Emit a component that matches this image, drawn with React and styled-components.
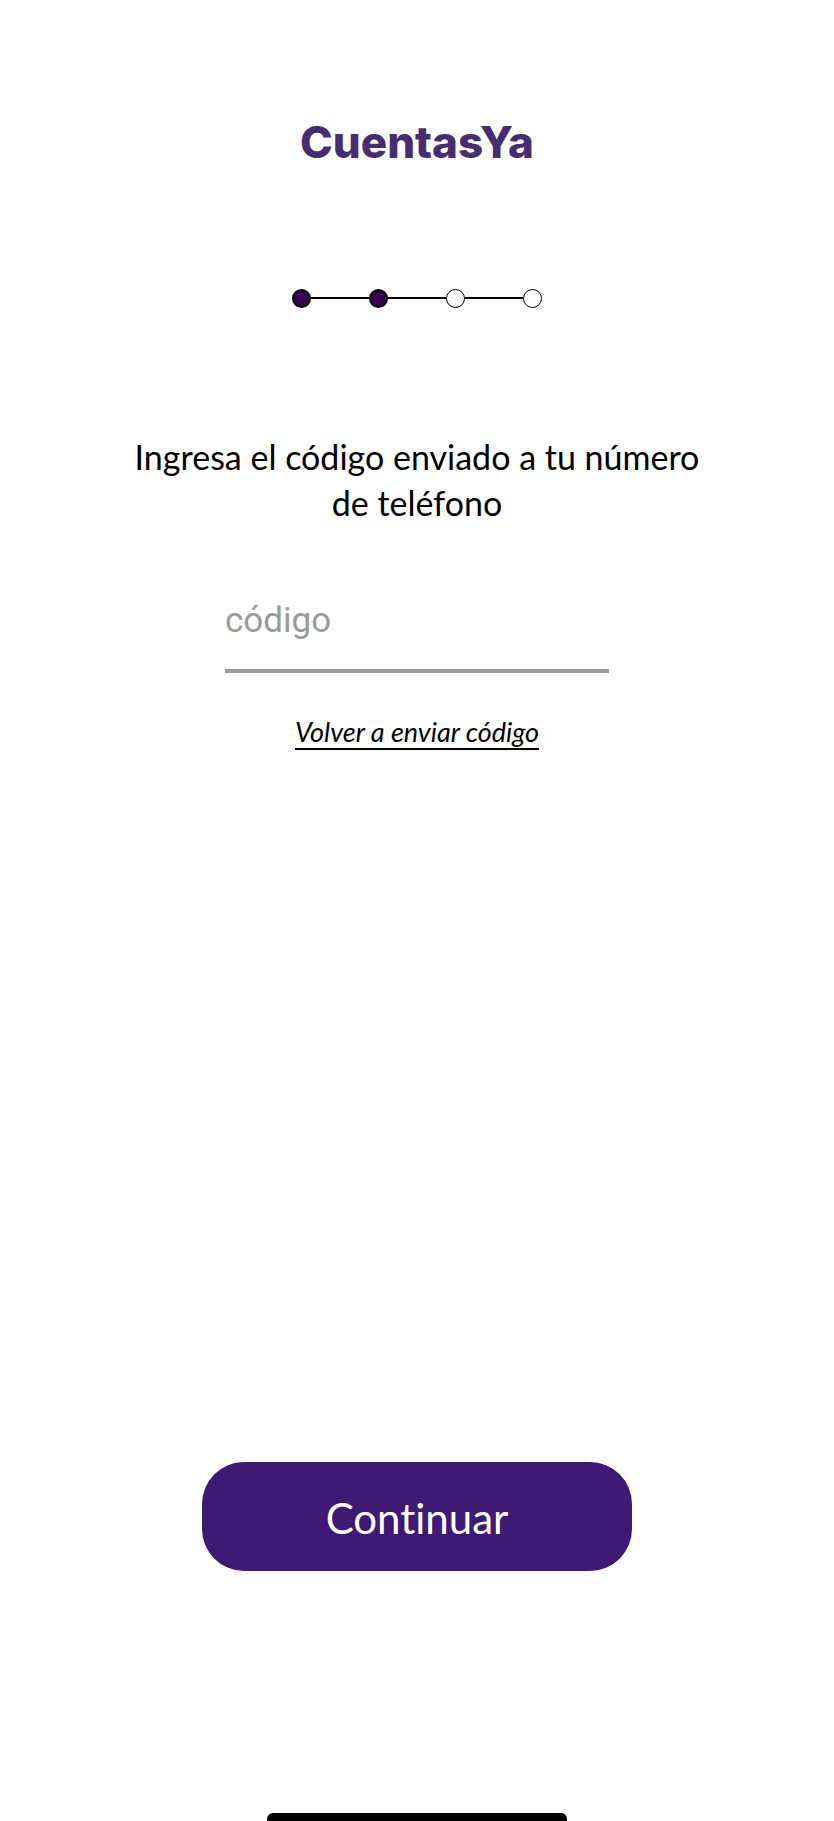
import React, { useState } from "react";
import styled, { createGlobalStyle } from "styled-components";

const GlobalStyle = createGlobalStyle`
  * { box-sizing: border-box; }
  body {
    margin: 0;
    background: #fefefe;
    color: #000;
    font-family: Lato, sans-serif;
    font-variant-ligatures: none;
  }
`;

const Screen = styled.main`
  display: flex;
  flex-direction: column;
  align-items: center;
  min-height: 100vh;
  padding: 115px 24px 0;
`;

const Logo = styled.h1`
  margin: 0;
  font-family: Inter, sans-serif;
  font-size: 44px;
  font-weight: 800;
  line-height: 54px;
  color: #472d70;
`;

const Steps = styled.ol`
  display: flex;
  align-items: center;
  margin: 120px 0 0;
  padding: 0;
  list-style: none;
`;

const Step = styled.li`
  display: flex;
  align-items: center;

  & + &::before {
    content: "";
    width: 58px;
    height: 2px;
    margin-bottom: 2px;
    background: #000;
  }
`;

const Dot = styled.span`
  width: 19px;
  height: 19px;
  border: ${({ $done }) => ($done ? 2 : 1)}px solid #000;
  border-radius: 50%;
  background: ${({ $done }) => ($done ? "#37004d" : "#fff")};
`;

const Form = styled.form`
  display: flex;
  flex: 1;
  flex-direction: column;
  align-items: center;
  width: 100%;
  margin-top: 126px;
`;

const Prompt = styled.label`
  max-width: 600px;
  font-size: 34px;
  line-height: 46px;
  text-align: center;
`;

const CodeInput = styled.input`
  width: 100%;
  max-width: 384px;
  height: 84px;
  margin-top: 63px;
  padding: 0 0 18px;
  border: 0;
  border-bottom: 4px solid #9a9a9a;
  outline: 0;
  background: transparent;
  font-family: Roboto, sans-serif;
  font-size: 35px;

  &::placeholder { color: #9a9a9a; opacity: 1; }
`;

const ResendLink = styled.a`
  margin-top: 43px;
  border-bottom: 2px solid #000;
  color: inherit;
  font-size: 27px;
  font-style: italic;
  line-height: 32px;
  text-decoration: none;
`;

const SubmitButton = styled.button`
  width: 100%;
  max-width: 430px;
  height: 109px;
  margin-top: auto;
  padding: 2px 0 0;
  border: 0;
  border-radius: 42px;
  background: #3f1a75;
  color: #fff;
  font-family: inherit;
  font-size: 42px;
  font-variant-ligatures: none;
`;

const HomeIndicator = styled.div`
  width: 300px;
  height: 8px;
  margin-top: 242px;
  border-radius: 6px 6px 0 0;
  background: #000;
`;

const steps = [
  { id: 1, done: true },
  { id: 2, done: true },
  { id: 3, done: false },
  { id: 4, done: false },
];

export default function App() {
  const [code, setCode] = useState("");

  return (
    <>
      <GlobalStyle />
      <Screen>
        <Logo>CuentasYa</Logo>
        <Steps>
          {steps.map(({ id, done }) => (
            <Step key={id}>
              <Dot $done={done} />
            </Step>
          ))}
        </Steps>
        <Form onSubmit={(event) => event.preventDefault()}>
          <Prompt htmlFor="code">Ingresa el código enviado a tu número de teléfono</Prompt>
          <CodeInput
            id="code"
            placeholder="código"
            inputMode="numeric"
            autoComplete="one-time-code"
            value={code}
            onChange={(event) => setCode(event.target.value)}
          />
          <ResendLink href="#reenviar">Volver a enviar código</ResendLink>
          <SubmitButton type="submit">Continuar</SubmitButton>
        </Form>
        <HomeIndicator />
      </Screen>
    </>
  );
}
